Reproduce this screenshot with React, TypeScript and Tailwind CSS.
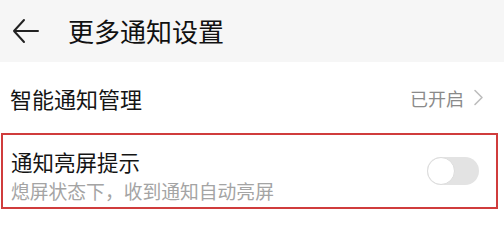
export default function App() {
  return (
    <div className="w-[504px] h-[225px] bg-white overflow-hidden font-['Noto_Sans_CJK_SC','Noto_Sans',sans-serif]">
      {/* Header */}
      <div className="h-[62px] bg-[#f6f6f6] flex items-center pl-[12px]">
        <svg width="28" height="28" viewBox="0 0 28 28" fill="none" stroke="#222" strokeWidth="2" strokeLinecap="round" strokeLinejoin="round">
          <path d="M26 14H2M12 3L2 14l10 11" />
        </svg>
        <span className="ml-[28px] text-[26px] leading-[30px] text-[#111]">更多通知设置</span>
      </div>

      {/* Smart notification row */}
      <div className="h-[71px] flex items-center justify-between pl-[10px] pr-[20px]">
        <span className="text-[22px] leading-[26px] text-[#141414]">智能通知管理</span>
        <div className="flex items-center gap-[9px]">
          <span className="text-[18px] leading-[22px] text-[#8a8a8a]">已开启</span>
          <svg width="11" height="17" viewBox="0 0 11 17" fill="none" stroke="#bdbdbd" strokeWidth="1.6" strokeLinecap="round" strokeLinejoin="round">
            <path d="M2 1.5l7 7-7 7" />
          </svg>
        </div>
      </div>

      {/* Highlighted row */}
      <div className="mx-[1px] w-[497px] border-2 border-[#d03c3c] flex items-center justify-between pl-[8px] pr-[17px]">
        <div className="flex flex-col pt-[15px] pb-[5px]">
          <span className="text-[21.5px] leading-[24px] text-[#141414]">通知亮屏提示</span>
          <span className="mt-[6px] text-[18.8px] leading-[22px] text-[#a4a4a4]">熄屏状态下，收到通知自动亮屏</span>
        </div>
        <div className="w-[52px] h-[28px] rounded-full bg-[#e3e3e3] flex items-center">
          <div className="w-[28px] h-[28px] rounded-full bg-white border border-[#dcdcdc]" />
        </div>
      </div>
    </div>
  )
}
